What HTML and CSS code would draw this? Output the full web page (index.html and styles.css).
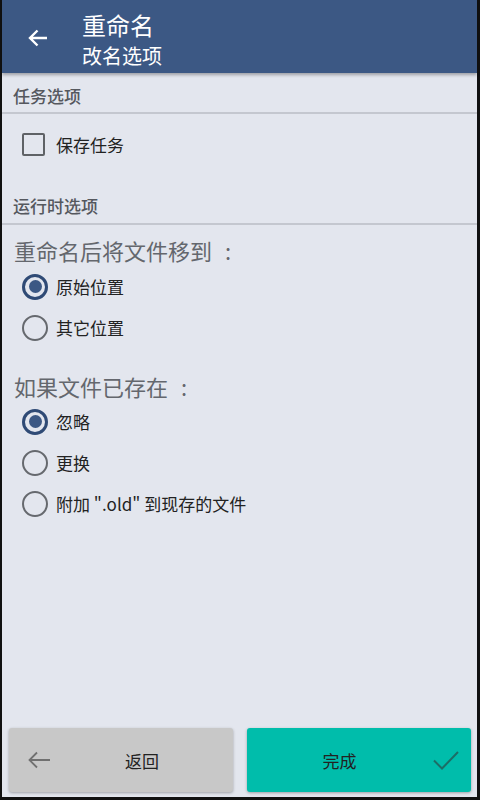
FILE: index.html
```html
<!DOCTYPE html>
<html lang="zh">
<head>
<meta charset="utf-8">
<link rel="stylesheet" href="styles.css">
</head>
<body>
<div class="frame">
  <header class="appbar">
    <svg class="back" width="24" height="24" viewBox="0 0 24 24"><path d="M21 12H4.5M11.5 4.5 4 12l7.5 7.5" fill="none" stroke="#fff" stroke-width="2.4"/></svg>
    <div class="titles">
      <div class="title">重命名</div>
      <div class="subtitle">改名选项</div>
    </div>
  </header>
  <main class="content">
    <div class="section s1">任务选项</div>
    <div class="row check-row"><span class="checkbox"></span><span class="label">保存任务</span></div>
    <div class="section s2">运行时选项</div>
    <div class="question q1">重命名后将文件移到<span class="colon">:</span></div>
    <div class="row"><span class="radio on"></span><span class="label">原始位置</span></div>
    <div class="row"><span class="radio"></span><span class="label">其它位置</span></div>
    <div class="question q2">如果文件已存在<span class="colon">:</span></div>
    <div class="row"><span class="radio on"></span><span class="label">忽略</span></div>
    <div class="row"><span class="radio"></span><span class="label">更换</span></div>
    <div class="row"><span class="radio"></span><span class="label">附加 ".old" 到现存的文件</span></div>
  </main>
  <footer class="buttons">
    <div class="btn btn-back">
      <svg class="btn-icon" width="24" height="20" viewBox="0 0 24 20"><path d="M23 10H2.5M10 2.5 2.5 10l7.5 7.5" fill="none" stroke="#707070" stroke-width="1.8"/></svg>
      <span class="btn-label">返回</span>
    </div>
    <div class="btn btn-done">
      <span class="btn-label">完成</span>
      <svg class="btn-icon" width="28" height="22" viewBox="0 0 28 22"><path d="M2 11.5l8 8L26 3" fill="none" stroke="#1c6e66" stroke-width="2"/></svg>
    </div>
  </footer>
</div>
</body>
</html>
```
FILE: styles.css
```css
html, body {
  margin: 0;
  padding: 0;
  background: #111;
}
body {
  width: 480px;
  height: 800px;
  font-family: "Noto Sans CJK SC", "Noto Sans", sans-serif;
}
.frame {
  width: 475px;
  height: 797px;
  margin-left: 2px;
  background: #e3e6ee;
  display: flex;
  flex-direction: column;
}
.appbar {
  flex: none;
  box-sizing: border-box;
  height: 73px;
  background: #3c5884;
  display: flex;
  align-items: flex-start;
  box-shadow: 0 2px 3px rgba(0,0,0,0.3);
  position: relative;
  z-index: 1;
}
.back {
  margin: 26px 32px 0 24px;
}
.titles {
  color: #fff;
  display: flex;
  flex-direction: column;
  padding-top: 10px;
}
.title {
  font-size: 24px;
  line-height: 30px;
}
.subtitle {
  font-size: 20px;
  line-height: 26px;
  margin-top: 3px;
}
.content {
  flex: 1;
  display: flex;
  flex-direction: column;
}
.section {
  box-sizing: border-box;
  font-size: 17px;
  font-weight: 500;
  color: #55585e;
  line-height: 22px;
  padding-left: 11px;
  border-bottom: 2px solid #c4c7cf;
}
.s1 {
  height: 41px;
  padding-top: 12px;
}
.s2 {
  height: 51px;
  padding-top: 21px;
}
.row {
  flex: none;
  display: flex;
  align-items: center;
  height: 41px;
}
.check-row {
  height: 60px;
}
.label {
  font-size: 17px;
  color: #222;
}
.checkbox {
  flex: none;
  box-sizing: border-box;
  width: 23px;
  height: 23px;
  border: 2px solid #5f6266;
  border-radius: 2px;
  margin-left: 20px;
  margin-right: 11px;
}
.radio {
  flex: none;
  box-sizing: border-box;
  width: 26px;
  height: 26px;
  border: 2px solid #66696e;
  border-radius: 50%;
  margin-left: 20px;
  margin-right: 8px;
  display: flex;
  align-items: center;
  justify-content: center;
}
.radio.on {
  border: 3px solid #2f4a75;
}
.radio.on::after {
  content: "";
  width: 13px;
  height: 13px;
  border-radius: 50%;
  background: #3c5884;
}
.question {
  flex: none;
  box-sizing: border-box;
  font-size: 22px;
  color: #64676d;
  padding-left: 12px;
  line-height: 30px;
}
.colon {
  margin-left: 13px;
}
.q1 {
  height: 41px;
  padding-top: 10px;
}
.q2 {
  height: 53px;
  padding-top: 23px;
}
.buttons {
  flex: none;
  display: flex;
  gap: 14px;
  padding: 0 6px 5px 7px;
}
.btn {
  flex: 1;
  height: 64px;
  border-radius: 3px;
  display: flex;
  align-items: center;
  box-shadow: 0 1px 3px rgba(0,0,0,0.3);
}
.btn-back {
  background: #c8c8c8;
}
.btn-done {
  background: #00bdab;
}
.btn-label {
  font-size: 17px;
  color: #222;
  flex: 1;
  text-align: center;
}
.btn-back .btn-icon {
  margin-left: 18px;
}
.btn-done .btn-icon {
  margin-right: 11px;
}
```
